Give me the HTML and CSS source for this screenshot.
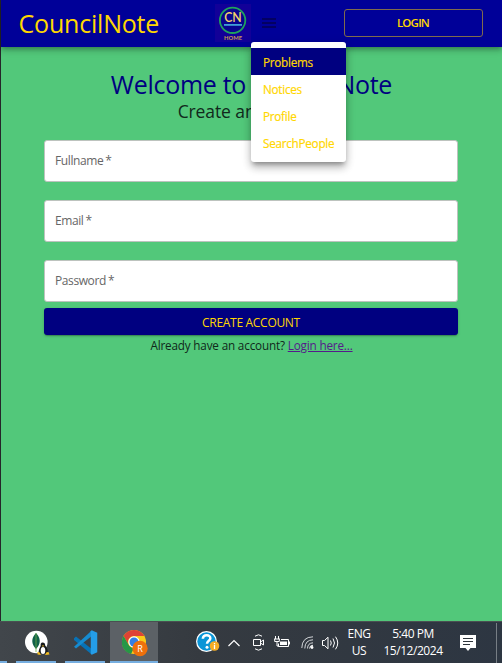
FILE: index.html
```html
<!DOCTYPE html>
<html lang="en">
<head>
<meta charset="utf-8">
<title>CouncilNote</title>
<link rel="stylesheet" href="styles.css">
</head>
<body>
<div class="app">
  <header class="bar">
    <div class="brand">CouncilNote</div>
    <svg class="logo" width="36" height="38" viewBox="0 0 36 38">
      <rect width="36" height="38" fill="#120098"/>
      <circle cx="17.6" cy="16.3" r="12.7" fill="#08058e" stroke="#20a35c" stroke-width="1.8"/>
      <rect x="9" y="20" width="18" height="1.8" fill="#3f9fd6"/>
      <text x="17.9" y="18" class="logo-main" textLength="17.5" lengthAdjust="spacingAndGlyphs">CN</text>
      <text x="18" y="36.4" class="logo-sub" textLength="18" lengthAdjust="spacingAndGlyphs">HOME</text>
    </svg>
    <nav class="menu-wrap">
      <svg class="burger" width="14" height="10" viewBox="0 0 14 10"><path d="M0 1h14M0 5h14M0 9h14" stroke="#050050" stroke-width="1.7"/></svg>
      <ul class="menu">
        <li class="selected">Problems</li>
        <li>Notices</li>
        <li>Profile</li>
        <li>SearchPeople</li>
      </ul>
    </nav>
    <button class="login">LOGIN</button>
  </header>
  <main>
    <h1>Welcome to CouncilNote</h1>
    <h2>Create an Account</h2>
    <form>
      <label class="field">Fullname<span class="req">*</span></label>
      <label class="field">Email<span class="req">*</span></label>
      <label class="field">Password<span class="req">*</span></label>
      <button class="create" type="button">CREATE ACCOUNT</button>
    </form>
    <p class="have">Already have an account? <a href="#">Login here...</a></p>
  </main>
</div>
<footer class="taskbar">
  <div class="edge"></div>
  <div class="task t1">
    <svg width="26" height="26" viewBox="0 0 26 26"><circle cx="11.3" cy="12" r="11.3" fill="#fff"/><path d="M11 3c5 5 5 11 0 16c-5-5-5-11 0-16z" fill="#116149"/><path d="M11 3v19" stroke="#6cac48" stroke-width=".8"/><path d="M17.5 12.5c2 0 2.700 1 2.700 3c2 2 3 5 2.500 8h-9c-.5-3 1-5.500 2-7.500c-.2-2 .3-3.500 1.800-3.500z" fill="#171a1c"/><ellipse cx="18" cy="20.500" rx="2.300" ry="3.500" fill="#fff"/><path d="M12.500 22l2 .3 1.500 2.700-3.500-.5zM23.500 22l-2 .3-1.500 2.700 4.500-.5zM16.800 15.500h2.400l-1.200 1.500z" fill="#f4bc20"/></svg>
  </div>
  <div class="task t2">
    <svg width="25" height="25" viewBox="0 0 100 100"><path d="M4 33l8-7 63 50v22L4 40z" fill="#0872b5"/><path d="M4 67L75 2v22L12 74l-8-7z" fill="#168bd0"/><path d="M75 1l22 10v78L75 99l-4-4V5z" fill="#249de8"/></svg>
  </div>
  <div class="task t3">
    <svg width="26" height="27" viewBox="0 0 26 27"><circle cx="12" cy="12" r="12" fill="#fbc918"/><path d="M1.600 6A12 12 0 0 1 22.400 6H12a6 6 0 0 0-5.200 9z" fill="#df4335"/><path d="M1.600 6l5.200 9A6 6 0 0 0 12 18l-3 6A12 12 0 0 1 1.600 6z" fill="#269747"/><circle cx="12" cy="12" r="5.700" fill="#fff"/><circle cx="12" cy="12" r="4.500" fill="#347fe5"/><circle cx="18" cy="18.500" r="7.700" fill="#ee700c"/><text x="18" y="21.700" class="badge-r">R</text></svg>
  </div>
  <div class="tray">
    <svg width="25" height="23" viewBox="0 0 25 23"><circle cx="10.500" cy="10.500" r="10.500" fill="#fff"/><circle cx="10.500" cy="10.500" r="9.200" fill="#0a95d7"/><path d="M6.800 7.800c.3-5 8-4.500 7.500-.2c-.2 2.200-3.300 2.400-3.300 5.200" fill="none" stroke="#fff" stroke-width="2.500"/><circle cx="11" cy="16.300" r="1.500" fill="#fff"/><circle cx="18.500" cy="15" r="4.800" fill="#f5ad24"/><path d="M18.500 12v1.300M18.500 14v4" stroke="#fff" stroke-width="1.300"/></svg>
    <svg class="chev" width="12" height="8" viewBox="0 0 12 8"><path d="M.5 7L6 1.500 11.500 7" fill="none" stroke="#fff" stroke-width="1.200"/></svg>
    <svg class="cam" width="12" height="17" viewBox="0 0 12 17"><path d="M2 2.200Q5.500-.6 9 2.200M2 14.800Q5.500 17.600 9 14.800M.5 5.500h7v6h-7zM7.500 8l3-2v5l-3-2" fill="none" stroke="#fff"/></svg>
    <svg class="batt" width="16" height="13" viewBox="0 0 16 13"><path d="M1.500 0v3M4.500 0v3M0 3h6M.7 3v2.500h4.600V3M3 5.500V10h2" fill="none" stroke="#fff"/><path d="M7 3.500h7.500v7H4.500V7.500" fill="none" stroke="#fff"/><path d="M6 5.500h7V9H6zM14.500 5.500H16v3h-1.500z" fill="#fff"/></svg>
    <svg class="wifi" width="13" height="13" viewBox="0 0 13 13"><g fill="none" stroke="#d2d5d8"><path d="M.8 12Q1 1 12 .8M3.800 12.500Q4 4 12 3.800M6.500 12.500Q6.700 7 12 6.800"/><path d="M8.600 12.500Q8.800 9.300 12 9.200" stroke="#fff"/></g><circle cx="11" cy="11.500" r="1.400" fill="#fff"/></svg>
    <svg class="vol" width="17" height="14" viewBox="0 0 17 14"><path d="M.5 4.500h2L6 1.200v11.600L2.500 9.500h-2zM8.500 4.500q1.500 2.500 0 5M11 2.500q3 4.500 0 9M13.500.7q4.500 6.300 0 12.600" fill="none" stroke="#fff"/></svg>
    <div class="lang"><span>ENG</span><span>US</span></div>
    <div class="clock"><span>5:40 PM</span><span>15/12/2024</span></div>
    <svg class="note" width="16" height="16" viewBox="0 0 16 16"><path d="M0 0h16v13h-5.500L8 16l-2.500-3H0z" fill="#fff"/><path d="M3 3.500h10M3 6.500h10M3 9.500h7" stroke="#2d343b"/></svg>
    <div class="desk"></div>
  </div>
</footer>
</body>
</html>
```
FILE: styles.css
```css
* { box-sizing: border-box; }
body { margin: 0; width: 502px; height: 663px; overflow: hidden; display: flex; flex-direction: column; font: 12px "Open Sans", "Noto Sans", sans-serif; background: #373c42; }
.app { height: 621px; border-left: 1px solid #25252a; background: #52c87a; flex: none; }
.bar { height: 47px; display: flex; align-items: flex-start; background: #000098; box-shadow: 0 2px 4px -1px #0003, 0 4px 5px #0002, 0 1px 10px #0002; }
.brand { width: 196px; padding-left: 17.5px; margin-right: 18px; font-size: 25px; line-height: 47px; letter-spacing: -.2px; color: #ffd700; white-space: nowrap; }
.logo { margin-top: 4px; flex: none; }
.logo-main { font: 600 13px Lato, sans-serif; fill: #f4d36b; text-anchor: middle; }
.logo-sub { font: 700 6px Lato, sans-serif; fill: #c99b55; text-anchor: middle; }
.menu-wrap { position: relative; width: 14px; height: 47px; margin-left: 11px; }
.burger { display: block; margin-top: 18px; }
.menu { position: absolute; z-index: 2; top: 42px; left: -11px; width: 95px; height: 120px; margin: 0; padding: 6px 0; list-style: none; background: #fff; border-radius: 3px; box-shadow: 0 4px 4px -2px #0004, 0 6px 8px #0003, 0 2px 11px #0002; }
.menu li { height: 27px; padding-left: 12px; font-size: 11.7px; line-height: 28px; font-weight: 500; color: #ffd700; letter-spacing: -.25px; white-space: nowrap; -webkit-text-stroke: .2px #ffd700; }
.menu .selected { background: #000080; }
.login { width: 139px; height: 28px; margin: 9px 0 0 68px; padding: 0 1px 2px 0; border: 1px solid #806b4c; border-radius: 3px; background: transparent; color: #ffd700; font: 600 11.5px "Open Sans", sans-serif; letter-spacing: -.8px; }
main { padding: 20px 43px 0; text-align: center; }
h1 { margin: 0; font-size: 25px; line-height: 34px; font-weight: 400; color: #000080; white-space: nowrap; letter-spacing: -.28px; }
h2 { margin: 0; font-size: 17.5px; line-height: 20px; font-weight: 400; color: #11291c; letter-spacing: -.1px; }
form { display: flex; flex-direction: column; margin-top: 19px; }
.field { height: 42px; margin-bottom: 18px; padding: 0 10px; border: 1px solid #bdc3be; border-radius: 3px; background: #fff; color: #666; text-align: left; line-height: 40px; font-size: 12px; letter-spacing: -.4px; width: 414px; }
.req { margin-left: 2px; }
.field:nth-of-type(3) { margin-bottom: 6px; }
.create { width: 414px; height: 27px; padding: 0; border: 0; border-radius: 3px; background: #000080; color: #ffd700; font: 12px/29px "Open Sans", sans-serif; letter-spacing: -.3px; box-shadow: 0 2px 1px -1px #0003, 0 1px 3px #0003; }
.have { margin: 0; line-height: 20px; font-size: 11.7px; letter-spacing: -.16px; color: #10291b; }
.have a { color: #551a8b; }
.taskbar { display: flex; height: 42px; background: linear-gradient(90deg, #41464b, #353a40 40%, #2d3642); border-top: 1px solid #4a5052; color: #fff; }
.edge { width: 7px; border-bottom: 2px solid #76aee0; }
.task { height: 41px; border-bottom: 2px solid #76aee0; display: flex; justify-content: center; padding-top: 8px; flex: none; }
.t1 { width: 40px; margin-left: 9px; padding-left: 3px; }
.t2 { width: 40px; margin-left: 9px; }
.t3 { width: 48px; margin-left: 5px; padding-left: 2px; background: #5c6166; }
.badge-r { font: 9px "Open Sans", sans-serif; fill: #fff; text-anchor: middle; }
.tray { display: flex; align-items: center; margin-left: 38px; }
.tray svg { flex: none; }
.chev { margin-left: 7px; }
.cam { margin-left: 13px; }
.batt { margin-left: 9px; }
.wifi { margin-left: 11px; }
.vol { margin-left: 8px; }
.lang, .clock { display: flex; flex-direction: column; text-align: center; line-height: 17px; font-size: 12px; letter-spacing: -.45px; margin-top: -2px; }
.lang { width: 24px; margin-left: 8px; }
.clock { width: 66px; margin-left: 9px; }
.note { margin-left: 14px; }
.desk { width: 1px; height: 40px; margin-left: 20px; background: #777e85; }
```
